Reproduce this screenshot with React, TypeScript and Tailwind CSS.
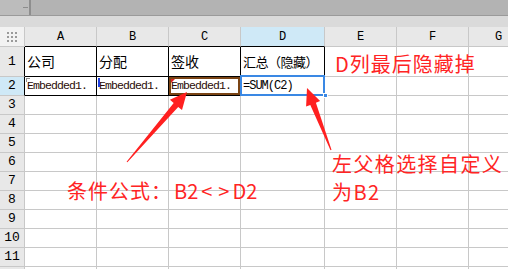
import React from "react";

const cols = [
  { k: "A", w: 72 },
  { k: "B", w: 72 },
  { k: "C", w: 72 },
  { k: "D", w: 84 },
  { k: "E", w: 72 },
  { k: "F", w: 72 },
  { k: "G", w: 60 },
];

function arrowPath(sx: number, sy: number, tx: number, ty: number, head: number, sw: number, bw: number) {
  const dx = tx - sx;
  const dy = ty - sy;
  const len = Math.hypot(dx, dy);
  const ux = dx / len;
  const uy = dy / len;
  const nx = -uy;
  const ny = ux;
  const hx = tx - ux * head;
  const hy = ty - uy * head;
  const p = [
    [sx + nx * 0.5, sy + ny * 0.5],
    [hx + nx * sw, hy + ny * sw],
    [hx + nx * bw, hy + ny * bw],
    [tx, ty],
    [hx - nx * bw, hy - ny * bw],
    [hx - nx * sw, hy - ny * sw],
    [sx - nx * 0.5, sy - ny * 0.5],
  ];
  return "M" + p.map((q) => q[0].toFixed(1) + " " + q[1].toFixed(1)).join(" L") + " Z";
}

const mono = { fontFamily: '"Liberation Mono", monospace' };
const cjk = { fontFamily: '"Noto Sans CJK SC", "Noto Sans", sans-serif' };

export default function App() {
  const rows = Array.from({ length: 10 }, (_, i) => i + 3);
  return (
    <div className="relative w-[508px] h-[269px] overflow-hidden bg-white">
      {/* top toolbar area */}
      <div className="flex h-[16px] bg-[#b3b3b3] border-b border-[#9a9a9a]">
        <div className="w-[29px] h-full bg-[#bcbcbc] flex items-center justify-end pr-[1px]">
          <div className="w-[5px] h-[1px] bg-[#8c8c8c]" />
        </div>
        <div className="w-[2px] h-full bg-[#8e8e8e]" />
        <div className="flex-1" />
      </div>
      <div className="h-[11px] bg-[#dadada]" />

      {/* column header */}
      <div className="flex h-[20px]">
        <div className="w-[25px] shrink-0 bg-[#f2f2f2] border-r border-b border-[#c8c8c8] flex items-center justify-center">
          <div className="grid grid-cols-3 gap-[2px]">
            {Array.from({ length: 9 }).map((_, i) => (
              <div key={i} className="w-[2px] h-[2px] bg-[#9a9a9a]" />
            ))}
          </div>
        </div>
        {cols.map((c, i) => (
          <div
            key={c.k}
            style={{ width: c.w, ...mono }}
            className={
              "shrink-0 flex items-center justify-center text-[12px] text-black border-r border-[#c8c8c8] border-b " +
              (i < 4 ? "border-b-black " : "border-b-[#c8c8c8] ") +
              (c.k === "D" ? "bg-[#cfe9f7]" : "bg-[#e8e8e8]")
            }
          >
            {c.k}
          </div>
        ))}
      </div>

      {/* row 1 */}
      <div className="flex h-[30px]">
        <div className="w-[25px] shrink-0 bg-[#e8e8e8] border-r border-r-black border-b border-b-[#c8c8c8] flex items-center justify-center text-[13px] text-black" style={mono}>
          1
        </div>
        {["公司", "分配", "签收", "汇总（隐藏）"].map((t, i) => (
          <div
            key={i}
            style={{ width: cols[i].w, ...cjk }}
            className={
              "shrink-0 flex items-center pl-[2px] text-black border-r border-b border-black whitespace-nowrap overflow-hidden " +
              (i === 3 ? "text-[13px] tracking-[-0.5px]" : "text-[14px]")
            }
          >
            {t}
          </div>
        ))}
        {cols.slice(4).map((c) => (
          <div key={c.k} style={{ width: c.w }} className="shrink-0 border-r border-b border-[#c8c8c8]" />
        ))}
      </div>

      {/* row 2 */}
      <div className="flex h-[19px]">
        <div className="w-[25px] shrink-0 bg-[#cfe9f7] border-r border-r-black border-b border-b-[#c8c8c8] flex items-center justify-center text-[13px] text-black" style={mono}>
          2
        </div>
        {[0, 1, 2].map((i) => (
          <div
            key={i}
            style={{ width: cols[i].w }}
            className="relative shrink-0 flex items-center pl-[2px] border-r border-b border-black whitespace-nowrap overflow-hidden"
          >
            <span className="text-[11.5px] tracking-[-0.9px] text-[#2a0c06]" style={mono}>
              Embedded1.
            </span>
            {i === 0 && <div className="absolute left-[1px] top-[1px] w-[4px] h-[4px] border-l border-t border-[#8a8a8a]" />}
            {i === 1 && <div className="absolute left-[1px] top-[1px] w-[2px] h-[9px] bg-[#2040e0]" />}
            {i === 2 && (
              <>
                <div className="absolute inset-0 border-[2px] border-[#7a4414]" />
                <div className="absolute left-[2px] top-[2px] w-0 h-0 border-t-[4px] border-t-[#e02020] border-r-[4px] border-r-transparent" />
              </>
            )}
          </div>
        ))}
        <div
          style={{ width: cols[3].w, ...mono }}
          className="relative shrink-0 flex items-center pl-[2px] border-r border-b border-black whitespace-nowrap text-[12px] tracking-[-1px] text-black"
        >
          =SUM(C2)
          <div className="absolute -left-[1px] -top-[2px] -right-[1px] -bottom-[1px] border-[2px] border-[#3a88e4]" />
          <div className="absolute -right-[4px] -bottom-[3px] w-[5px] h-[5px] bg-[#3a88e4] border border-white" />
        </div>
        {cols.slice(4).map((c) => (
          <div key={c.k} style={{ width: c.w }} className="shrink-0 border-r border-b border-[#c8c8c8]" />
        ))}
      </div>

      {/* rows 3-12 */}
      {rows.map((r) => (
        <div key={r} className="flex h-[19px]">
          <div className="w-[25px] shrink-0 bg-[#e8e8e8] border-r border-b border-[#c8c8c8] flex items-center justify-center text-[13px] text-black" style={mono}>
            {r}
          </div>
          {cols.map((c) => (
            <div key={c.k} style={{ width: c.w }} className="shrink-0 border-r border-b border-[#c8c8c8]" />
          ))}
        </div>
      ))}

      {/* annotations */}
      <div className="absolute left-[335px] top-[52px] text-[20px] leading-[24px] tracking-[1px] text-[#ff2424] whitespace-nowrap" style={cjk}>
        D列最后隐藏掉
      </div>
      <div className="absolute left-[67px] top-[179px] text-[20px] leading-[24px] text-[#ff2424] whitespace-nowrap flex" style={cjk}>
        <span className="tracking-[1px]">条件公式：</span>
        <span className="ml-[2px]">B2</span>
        <span className="ml-[3px]">&lt;</span>
        <span className="ml-[6px]">&gt;</span>
        <span className="ml-[3px]">D2</span>
      </div>
      <div className="absolute left-[332px] top-[150px] text-[20px] leading-[28px] tracking-[1.4px] text-[#ff2424] whitespace-nowrap" style={cjk}>
        <div>左父格选择自定义</div>
        <div>为B2</div>
      </div>

      <svg className="absolute left-0 top-0" width="508" height="269" viewBox="0 0 508 269">
        <path d={arrowPath(127, 162, 187, 92, 17, 3, 8)} fill="#ff2020" />
        <path d={arrowPath(331, 150, 307, 88, 17, 3, 7.5)} fill="#ff2020" />
      </svg>
    </div>
  );
}
